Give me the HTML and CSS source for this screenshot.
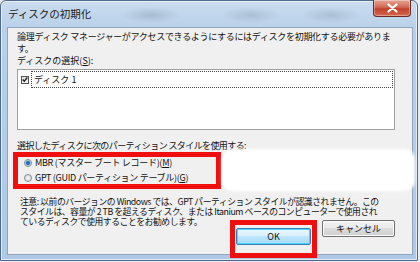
FILE: index.html
```html
<!DOCTYPE html>
<html lang="ja">
<head>
    <meta charset="UTF-8">
    <title>ディスクの初期化</title>
    <link rel="stylesheet" href="styles.css">
</head>
<body>
    <div class="window">
        <div class="titlebar">
            <span class="title">ディスクの初期化</span>
            <button class="close" aria-label="閉じる">
                <svg width="11" height="10" viewBox="0 0 11 10">
                    <path d="M1.5 1.5 L9.5 8.5 M9.5 1.5 L1.5 8.5" stroke="#fff" stroke-width="2.2" stroke-linecap="round"/>
                </svg>
            </button>
        </div>
        <div class="panel">
            <p class="intro">論理ディスク マネージャーがアクセスできるようにするにはディスクを初期化する必要がありま<br>す。</p>
            <p class="label">ディスクの選択(<u>S</u>):</p>
            <div class="listbox">
                <div class="item">
                    <span class="check">
                        <svg width="7" height="7" viewBox="0 0 7 7">
                            <path d="M0.8 3.4 L2.7 5.4 L6.2 1.2" fill="none" stroke="#222" stroke-width="1.6"/>
                        </svg>
                    </span>
                    <span class="item-text">ディスク 1</span>
                </div>
            </div>
            <p class="label label-style">選択したディスクに次のパーティション スタイルを使用する:</p>
            <div class="options-row">
                <div class="options marked">
                    <label class="radio"><span class="dot on"></span><span>MBR (マスター ブート レコード)(<u>M</u>)</span></label>
                    <label class="radio"><span class="dot"></span><span>GPT (GUID パーティション テーブル)(<u>G</u>)</span></label>
                </div>
                <div class="blot"></div>
            </div>
            <p class="note">注意: 以前のバージョンの Windows では、GPT パーティション スタイルが認識されません。この<br>スタイルは、容量が 2 TB を超えるディスク、または Itanium ベースのコンピューターで使用され<br>ているディスクで使用することをお勧めします。</p>
            <div class="buttons">
                <div class="marked ok-mark">
                    <button class="btn default">OK</button>
                </div>
                <button class="btn">キャンセル</button>
            </div>
        </div>
    </div>
</body>
</html>
```

FILE: styles.css
```css
body {
    margin: 0;
    background: #e9edf1;
    font-family: "Noto Sans CJK JP", "Noto Sans", sans-serif;
    color: #111;
}
p {
    margin: 0;
}
.window {
    width: 418px;
    height: 261px;
    box-sizing: border-box;
    border: 1px solid #4d6a8c;
    border-radius: 6px 6px 0 0;
    padding: 0 4px 5px 6px;
    display: flex;
    flex-direction: column;
    background:
        radial-gradient(ellipse 30px 8px at 150px 14px, rgba(120,140,160,0.35), transparent),
        radial-gradient(ellipse 30px 8px at 250px 14px, rgba(120,140,160,0.3), transparent),
        radial-gradient(ellipse 30px 8px at 330px 14px, rgba(120,140,160,0.3), transparent),
        linear-gradient(#c9dcef, #b8d0e9 30px, #aec9e5);
    box-shadow: inset 0 0 0 1px rgba(255,255,255,0.6);
}
.titlebar {
    height: 26px;
    display: flex;
    align-items: flex-start;
    justify-content: space-between;
}
.title {
    font-size: 10.5px;
    line-height: 14px;
    margin: 6px 0 0 1px;
    color: #1a1a1a;
}
.close {
    width: 38px;
    height: 17px;
    margin: -1px 2px 0 0;
    padding: 0;
    border: 1px solid #6b2a22;
    border-top: none;
    border-radius: 0 0 4px 4px;
    background: linear-gradient(#e6a493, #cf6a54 45%, #c2402a 55%, #d46a4e);
    display: flex;
    align-items: center;
    justify-content: center;
    box-shadow: inset 0 0 0 1px rgba(255,255,255,0.35);
}
.panel {
    flex: 1;
    background: #f0f0f0;
    border: 1px solid #8fa5bf;
    padding: 3px 17px 0 9px;
    font-size: 9px;
    line-height: 12px;
    display: flex;
    flex-direction: column;
    align-items: flex-start;
    white-space: nowrap;
}
.intro {
    letter-spacing: -0.3px;
}
.listbox {
    width: 378px;
    height: 61px;
    box-sizing: border-box;
    margin-top: 2px;
    background: #fff;
    border: 1px solid #a0a0a0;
    padding: 1px 1px 0 3px;
}
.item {
    display: flex;
    align-items: center;
    height: 17px;
}
.check {
    width: 8px;
    height: 8px;
    box-sizing: border-box;
    border: 1px solid #555;
    background: linear-gradient(135deg, #dcdcdc, #fafafa);
    display: flex;
    align-items: center;
    justify-content: center;
}
.item-text {
    flex: 1;
    height: 17px;
    box-sizing: border-box;
    margin-left: 2px;
    padding-left: 2px;
    border: 1px dotted #444;
    line-height: 15px;
}
.label-style {
    margin-top: 10px;
    letter-spacing: -0.6px;
}
.options-row {
    display: flex;
    align-items: center;
    margin: -1px 0 0 -4px;
}
.marked {
    border: 5px solid #f00f0f;
}
.options {
    width: 192px;
    padding: 0 0 0 6px;
    display: flex;
    flex-direction: column;
    gap: 3px;
    letter-spacing: -0.3px;
}
.radio {
    display: flex;
    align-items: center;
    height: 12px;
    gap: 3px;
}
.dot {
    width: 8px;
    height: 8px;
    box-sizing: border-box;
    border-radius: 50%;
    border: 1px solid #7d8a96;
    background: radial-gradient(circle, #f6f6f6, #d6d6d6);
}
.dot.on {
    background: radial-gradient(circle, #2c6fb0 0 1.8px, #7fb1e0 2.2px, #e4eef8 3px);
}
.blot {
    width: 189px;
    height: 38px;
    margin-left: 3px;
    background: #fff;
    border-radius: 8px;
    box-shadow: 0 0 3px 2px #fff;
}
.note {
    margin: 8px 0 0 3px;
    font-size: 8.8px;
    line-height: 10px;
    letter-spacing: -0.45px;
}
.buttons {
    align-self: flex-end;
    display: flex;
    align-items: flex-start;
    gap: 5px;
    margin-top: -7px;
}
.ok-mark {
    padding: 3px 1px 8px 1px;
    margin-bottom: -8px;
}
.btn {
    height: 17px;
    width: 73px;
    padding: 0;
    font-family: inherit;
    font-size: 9px;
    color: #111;
    border: 1px solid #707070;
    border-radius: 2px;
    background: linear-gradient(#f2f2f2, #ebebeb 45%, #dddddd 50%, #cfcfcf);
    box-shadow: inset 0 0 0 1px #fcfcfc;
}
.btn.default {
    width: 75px;
    border-color: #3c7fb1;
    background: linear-gradient(#eaf6fd, #d9f0fc 45%, #bee6fd 50%, #a7d9f5);
    box-shadow: inset 0 0 0 1px #48d5ff;
}
```
